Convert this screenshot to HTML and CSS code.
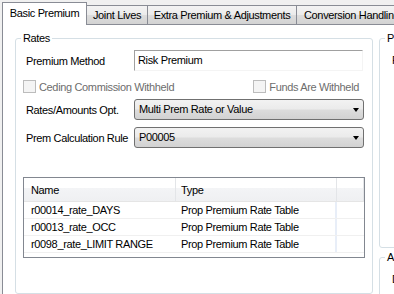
FILE: index.html
```html
<!DOCTYPE html>
<html lang="en">
<head>
  <meta charset="UTF-8" />
  <title>Basic Premium</title>
  <link rel="stylesheet" href="styles.css">
</head>
<body>
  <div class="window">
    <div class="tabs">
      <div class="tab active tab-basic">Basic Premium</div>
      <div class="tab tab-joint">Joint Lives</div>
      <div class="tab tab-extra">Extra Premium &amp; Adjustments</div>
      <div class="tab tab-conv">Conversion Handling</div>
    </div>

    <div class="panel">
      <fieldset class="group rates">
        <legend>Rates</legend>

        <div class="row first">
          <span class="label">Premium Method</span>
          <div class="textbox">Risk Premium</div>
        </div>

        <div class="checks">
          <label class="check"><span class="box"></span>Ceding Commission Withheld</label>
          <label class="check right"><span class="box"></span>Funds Are Withheld</label>
        </div>

        <div class="row opt">
          <span class="label">Rates/Amounts Opt.</span>
          <div class="combo">Multi Prem Rate or Value<span class="arrow"></span></div>
        </div>

        <div class="row calc">
          <span class="label">Prem Calculation Rule</span>
          <div class="combo">P00005<span class="arrow"></span></div>
        </div>

        <!-- rate tables list -->
        <div class="list">
          <div class="list-head">
            <div class="col col-name">Name</div>
            <div class="col col-type">Type</div>
            <div class="col col-rest"></div>
          </div>
          <div class="list-row">
            <div class="col col-name">r00014_rate_DAYS</div>
            <div class="col col-type">Prop Premium Rate Table</div>
            <div class="col col-rest"></div>
          </div>
          <div class="list-row">
            <div class="col col-name">r00013_rate_OCC</div>
            <div class="col col-type">Prop Premium Rate Table</div>
            <div class="col col-rest"></div>
          </div>
          <div class="list-row">
            <div class="col col-name">r0098_rate_LIMIT RANGE</div>
            <div class="col col-type">Prop Premium Rate Table</div>
            <div class="col col-rest"></div>
          </div>
        </div>
      </fieldset>

      <div class="side">
        <fieldset class="group fee">
          <legend>Policy Fee</legend>
          <div class="side-label">Fee Amount</div>
        </fieldset>
        <fieldset class="group allow">
          <legend>Allowances</legend>
          <div class="side-label">Discount</div>
        </fieldset>
      </div>
    </div>
  </div>
</body>
</html>
```

FILE: styles.css
```css
html, body {
  margin: 0;
  padding: 0;
  width: 394px;
  height: 294px;
  overflow: hidden;
  background: #f0f0f0;
  font-family: "Liberation Sans", Arial, sans-serif;
  font-size: 11px;
  letter-spacing: -0.35px;
  color: #000;
}

.window {
  box-sizing: border-box;
  height: 294px;
  padding: 2px 0 0 2px;
  display: flex;
  flex-direction: column;
}

/* tab strip */
.tabs {
  display: flex;
  align-items: flex-end;
  height: 22px;
  flex-shrink: 0;
}

.tab {
  box-sizing: border-box;
  flex-shrink: 0;
  height: 19px;
  padding-top: 3px;
  line-height: 12px;
  text-align: center;
  white-space: nowrap;
  overflow: hidden;
  border: 1px solid #898c95;
  border-bottom: none;
  margin-right: -1px;
  background: linear-gradient(#f3f3f3, #ebebeb 50%, #dddddd 50%, #d3d3d3);
}

.tab.active {
  position: relative;
  z-index: 1;
  height: 23px;
  padding-top: 4px;
  margin-bottom: -1px;
  background: #fff;
}

.tab-basic { width: 85px; }
.tab-joint { width: 62px; }
.tab-extra { width: 150px; }
.tab-conv  {
  width: 120px;
  text-align: left;
  padding-left: 7px;
}

/* page */
.panel {
  flex: 1;
  display: flex;
  gap: 6px;
  padding: 7px 0 0 12px;
  background: #fff;
  border-top: 1px solid #898c95;
  border-left: 1px solid #898c95;
  overflow: hidden;
}

.group {
  margin: 0;
  padding: 0;
  border: 1px solid #d5dfe5;
  border-radius: 3px;
}

.group legend {
  margin-left: 5px;
  padding: 0 2px;
  line-height: 13px;
}

.rates {
  box-sizing: border-box;
  width: 358px;
  flex-shrink: 0;
  padding-bottom: 30px;
}

.row {
  display: flex;
  align-items: center;
  margin-left: 10px;
}

.row.first { margin-top: 5px; }
.row.opt { margin-top: 6px; }
.row.calc { margin-top: 7px; }

.label {
  width: 108px;
  flex-shrink: 0;
}

.textbox {
  box-sizing: border-box;
  width: 229px;
  height: 21px;
  line-height: 19px;
  padding-left: 3px;
  border: 1px solid;
  border-color: #a0a0a0 #f4f4f4 #f4f4f4 #a0a0a0;
}

.checks {
  display: flex;
  align-items: center;
  height: 13px;
  margin: 9px 13px 0 7px;
  color: #6d6d6d;
}

.check {
  display: flex;
  align-items: center;
  gap: 3px;
}

.check.right { margin-left: auto; }

.box {
  box-sizing: border-box;
  width: 13px;
  height: 13px;
  border: 1px solid #bcbcbc;
  background: #f4f4f4;
}

.combo {
  box-sizing: border-box;
  position: relative;
  width: 230px;
  height: 21px;
  line-height: 19px;
  padding-left: 4px;
  border: 1px solid #707070;
  border-radius: 3px;
  background: linear-gradient(#f2f2f2, #ebebeb 45%, #dcdcdc 55%, #d2d2d2);
}

.arrow {
  position: absolute;
  right: 4px;
  top: 8px;
  width: 0;
  height: 0;
  border-left: 3.5px solid transparent;
  border-right: 3.5px solid transparent;
  border-top: 4px solid #000;
}

/* list view */
.list {
  box-sizing: border-box;
  width: 342px;
  height: 81px;
  margin: 29px 0 0 7px;
  border: 1px solid #828790;
  background: #fff;
}

.list-head {
  display: flex;
  height: 23px;
  border-bottom: 1px solid #e5e5e5;
  background: linear-gradient(#fff 45%, #f3f4f6 45%, #eff0f2);
}

.list-head .col {
  line-height: 24px;
  border-right: 1px solid #e3e5e8;
}

.list-row {
  display: flex;
  height: 16px;
  line-height: 16px;
  border-bottom: 1px solid #f0f0f0;
}

.col {
  box-sizing: border-box;
  padding-left: 7px;
  white-space: nowrap;
}

.col-name { width: 152px; }
.col-type { width: 161px; padding-left: 5px; }
.col-rest { flex: 1; }

.list-row .col-rest {
  border-left: 2px solid #e8eef8;
  margin-left: -2px;
}

/* right hand groups */
.side {
  width: 160px;
  flex-shrink: 0;
  display: flex;
  flex-direction: column;
  gap: 3px;
}

.fee {
  box-sizing: border-box;
  flex-shrink: 0;
  height: 216px;
}

.allow {
  box-sizing: border-box;
  flex-shrink: 0;
  height: 60px;
}

.side-label {
  margin: 9px 0 0 12px;
}
```
